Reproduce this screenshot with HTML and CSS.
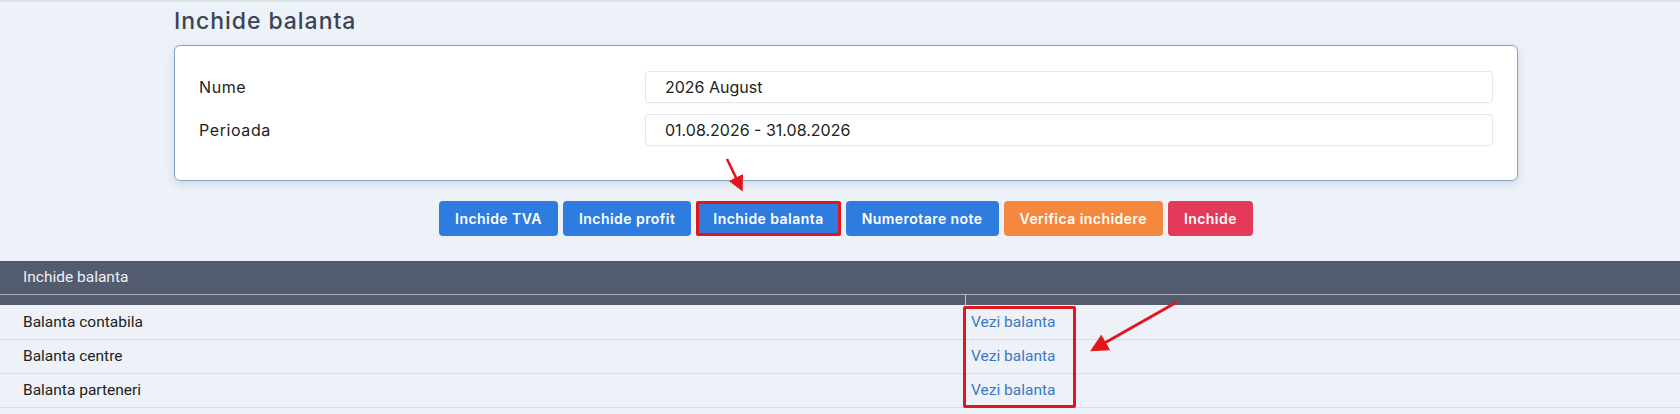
FILE: index.html
```html
<!DOCTYPE html>
<html lang="ro">
<head>
<meta charset="utf-8">
<title>Inchide balanta</title>
<link rel="stylesheet" href="styles.css">
</head>
<body>
<main class="page">
  <div class="container">
    <h1 class="title">Inchide balanta</h1>
    <section class="card">
      <div class="form-row">
        <label class="label">Nume</label>
        <div class="input">2026 August</div>
      </div>
      <div class="form-row">
        <label class="label">Perioada</label>
        <div class="input">01.08.2026 - 31.08.2026</div>
      </div>
    </section>
    <div class="actions">
      <button class="btn btn-blue">Inchide TVA</button>
      <button class="btn btn-blue">Inchide profit</button>
      <button class="btn btn-blue btn-marked">Inchide balanta</button>
      <button class="btn btn-blue">Numerotare note</button>
      <button class="btn btn-orange">Verifica inchidere</button>
      <button class="btn btn-red">Inchide</button>
    </div>
  </div>
  <table class="grid">
    <thead>
      <tr class="head-row"><th colspan="2">Inchide balanta</th></tr>
      <tr class="filter-row"><th class="c1"></th><th class="c2"></th></tr>
    </thead>
    <tbody>
      <tr><td class="c1">Balanta contabila</td><td class="c2"><a class="link" href="#">Vezi balanta</a></td></tr>
      <tr><td class="c1">Balanta centre</td><td class="c2"><a class="link" href="#">Vezi balanta</a></td></tr>
      <tr><td class="c1">Balanta parteneri</td><td class="c2"><a class="link" href="#">Vezi balanta</a></td></tr>
    </tbody>
  </table>
  <div class="mark-box"></div>
  <svg class="annotations" width="1680" height="414" viewBox="0 0 1680 414">
    <defs>
      <marker id="ah" markerWidth="6" markerHeight="6" refX="4.5" refY="3" orient="auto" markerUnits="strokeWidth">
        <path d="M0,0 L6,3 L0,6 Z" fill="#e3161c"/>
      </marker>
    </defs>
    <line x1="727" y1="159" x2="741" y2="188" stroke="#e3161c" stroke-width="2.6" marker-end="url(#ah)"/>
    <line x1="1177" y1="302" x2="1094" y2="349" stroke="#e3161c" stroke-width="3" marker-end="url(#ah)"/>
  </svg>
</main>
</body>
</html>
```
FILE: styles.css
```css
* { box-sizing: border-box; }
html, body { margin: 0; padding: 0; }
body {
  background: #edf1f8;
  font-family: Inter, "Noto Sans", "Liberation Sans", sans-serif;
  color: #222;
  width: 1680px;
  height: 414px;
  overflow: hidden;
}
.page {
  position: relative;
  border-top: 2px solid #dfe3ea;
  height: 414px;
}
.container {
  padding: 0 162px 0 174px;
}
.title {
  margin: 6px 0 10px 0;
  font-size: 23px;
  font-weight: 500;
  color: #3a4455;
  line-height: 27px;
  letter-spacing: 0.95px;
}
.card {
  background: #fff;
  border: 1px solid #86a2c2;
  border-radius: 6px;
  padding: 25px 24px 34px;
  display: flex;
  flex-direction: column;
  gap: 11px;
  box-shadow: 0 3px 8px rgba(120, 145, 180, 0.25);
}
.form-row {
  display: grid;
  grid-template-columns: 446px 1fr;
  align-items: center;
}
.label {
  font-size: 16px;
  color: #222;
  letter-spacing: 0.6px;
}
.input {
  height: 32px;
  border: 1px solid #e4e6ea;
  border-radius: 4px;
  padding: 0 19px;
  display: flex;
  align-items: center;
  font-size: 16px;
  color: #222;
  box-shadow: 0 1px 2px rgba(0, 0, 0, 0.03);
}
.actions {
  margin-top: 20px;
  display: flex;
  justify-content: center;
  gap: 5px;
}
.btn {
  height: 35px;
  border: 0;
  border-radius: 4px;
  padding: 0 16px;
  font-family: Inter, "Noto Sans", sans-serif;
  font-size: 14px;
  font-weight: 600;
  color: #fff;
  letter-spacing: 0.45px;
}
.btn-blue { background: #2f7ce0; }
.btn-orange { background: #f5883f; }
.btn-red { background: #e5395a; }
.btn-marked {
  border: 3px solid #e3161c;
  border-radius: 2px;
  padding: 0 14px;
}
.grid {
  margin-top: 25px;
  width: 1680px;
  border-collapse: collapse;
  font-family: Roboto, "Liberation Sans", sans-serif;
  font-size: 15.5px;
}
.grid th {
  background: #535b6e;
  color: #eef0f4;
  font-weight: 400;
  text-align: left;
}
.head-row th {
  height: 33px;
  padding: 0 23px;
}
.filter-row th {
  height: 11px;
  padding: 0;
  border-top: 1px solid #aab1bf;
}
.filter-row .c1 { border-right: 1px solid #c3c8d2; }
.c1 { width: 965px; }
.grid td {
  height: 34px;
  border-bottom: 1px solid #d8dde6;
  padding: 0;
  background: #eef2f8;
  color: #222;
}
.grid td.c1 { padding-left: 23px; }
.grid td.c2 { padding-left: 6px; }
.link {
  color: #3a78c4;
  text-decoration: none;
}
.mark-box {
  position: absolute;
  left: 963px;
  top: 304px;
  width: 113px;
  height: 102px;
  border: 3px solid #e3161c;
  border-radius: 2px;
}
.annotations {
  position: absolute;
  left: 0;
  top: -2px;
  pointer-events: none;
}
```
